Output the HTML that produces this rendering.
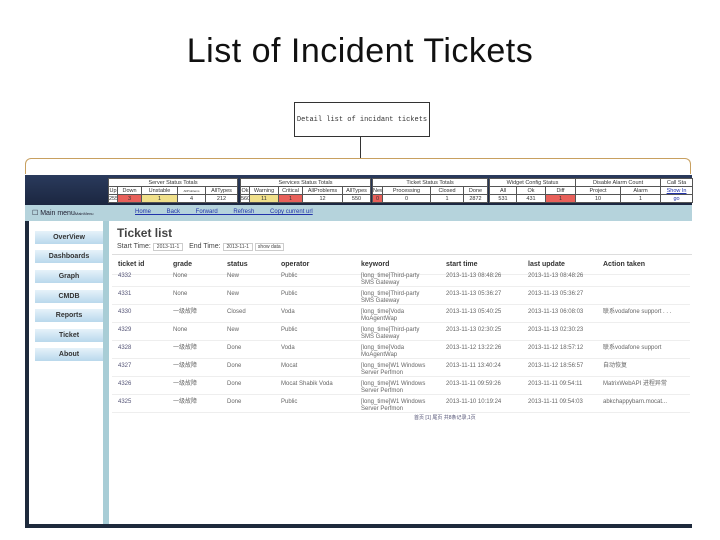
<!DOCTYPE html>
<html><head><meta charset="utf-8"><style>
*{margin:0;padding:0;box-sizing:border-box}
body{width:720px;height:540px;background:#fff;position:relative;overflow:hidden;font-family:"Liberation Sans","Noto Sans CJK SC",sans-serif}
.a{position:absolute}
h1{position:absolute;left:0;width:720px;top:32px;text-align:center;font-weight:normal;font-size:34px;color:#111;letter-spacing:0.5px}
table.s{position:absolute;top:178px;border-collapse:collapse;background:#fff;font-size:5.5px;color:#333;table-layout:fixed}
table.s td{border:1px solid #555;height:8px;text-align:center;line-height:6px;overflow:hidden;white-space:nowrap;padding:0}
.r{background:#e8605a}.y{background:#f0e08a}
.btn{position:absolute;left:35px;width:68px;height:13px;background:linear-gradient(#e6f2fa,#b9d8ec);font-size:7px;font-weight:bold;color:#333;text-align:center;line-height:13px}
.row{position:absolute;left:112px;width:578px;height:18px;border-bottom:1px solid #eee;font-size:6px;color:#666}
.row span{position:absolute;top:4px;line-height:7px}
.hd span{font-size:7px;font-weight:bold;color:#333}
</style></head><body>
<h1>List of Incident Tickets</h1>
<div class="a" style="left:294px;top:102px;width:136px;height:35px;border:1px solid #333;font-family:'Liberation Mono',monospace;font-size:7px;line-height:35px;text-align:center;color:#333">Detail list of incidant tickets</div>
<div class="a" style="left:360px;top:137px;width:1px;height:21px;background:#333"></div>
<div class="a" style="left:25px;top:158px;width:666px;height:16px;border:1px solid #c8a060;border-bottom:none;border-radius:6px 6px 0 0"></div>
<div class="a" style="left:25px;top:175px;width:667px;height:30px;background:linear-gradient(#2a3a5c,#1b2640)"></div>
<div class="a" style="left:25px;top:205px;width:667px;height:16px;background:#b5d3dc"></div>
<div class="a" style="left:25px;top:221px;width:4px;height:307px;background:#1e2a3c"></div>
<div class="a" style="left:29px;top:221px;width:76px;height:304px;background:#fff"></div>
<div class="a" style="left:103px;top:221px;width:6px;height:304px;background:#a8cdd6"></div>
<div class="a" style="left:25px;top:524px;width:667px;height:4px;background:#1e2a3c"></div>
<div class="a" style="left:32px;top:209px;font-size:7px;color:#223">☐ Main menu<span style="font-size:4px">MainMenu</span></div>
<div class="a" style="left:135px;top:209px;font-size:6px;color:#2233aa;text-decoration:underline;word-spacing:14px">Home Back Forward Refresh <span style="word-spacing:0">Copy current url</span></div>

<table class="s" style="left:108px;width:129px"><col style="width:9px"><col style="width:24px"><col style="width:36px"><col style="width:28px"><col style="width:32px">
<tr><td colspan="5">Server Status Totals</td></tr>
<tr><td>Up</td><td>Down</td><td>Unstable</td><td style="font-size:3px">AllProblems</td><td>AllTypes</td></tr>
<tr><td>255</td><td class="r">3</td><td class="y">1</td><td>4</td><td>212</td></tr></table>
<table class="s" style="left:240px;width:130px"><col style="width:9px"><col style="width:29px"><col style="width:24px"><col style="width:40px"><col style="width:28px">
<tr><td colspan="5">Services Status Totals</td></tr>
<tr><td>Ok</td><td>Warning</td><td>Critical</td><td>AllProblems</td><td>AllTypes</td></tr>
<tr><td>560</td><td class="y">11</td><td class="r">1</td><td>12</td><td>550</td></tr></table>
<table class="s" style="left:372px;width:115px"><col style="width:10px"><col style="width:48px"><col style="width:33px"><col style="width:24px">
<tr><td colspan="4">Ticket Status Totals</td></tr>
<tr><td>New</td><td>Processing</td><td>Closed</td><td>Done</td></tr>
<tr><td class="r">0</td><td>0</td><td>1</td><td>2872</td></tr></table>
<table class="s" style="left:489px;width:203px"><col style="width:27px"><col style="width:29px"><col style="width:30px"><col style="width:45px"><col style="width:40px"><col style="width:32px">
<tr><td colspan="3">Widget Config Status</td><td colspan="2">Disable Alarm Count</td><td>Call Sta</td></tr>
<tr><td>All</td><td>Ok</td><td>Diff</td><td>Project</td><td>Alarm</td><td style="color:#2233aa;text-decoration:underline">Show In</td></tr>
<tr><td>531</td><td>431</td><td class="r">1</td><td>10</td><td>1</td><td style="color:#2233aa">go</td></tr></table>

<div class="btn" style="top:231px">OverView</div>
<div class="btn" style="top:250px">Dashboards</div>
<div class="btn" style="top:270px">Graph</div>
<div class="btn" style="top:290px">CMDB</div>
<div class="btn" style="top:309px">Reports</div>
<div class="btn" style="top:329px">Ticket</div>
<div class="btn" style="top:348px">About</div>

<div class="a" style="left:117px;top:226px;font-size:12px;font-weight:bold;color:#444">Ticket list</div>
<div class="a" style="left:117px;top:242px;font-size:7px;color:#444;line-height:10px">Start Time: <span style="border:1px solid #ccc;padding:0 3px;font-size:5px">2013-11-1</span> &nbsp; End Time: <span style="border:1px solid #ccc;padding:0 3px;font-size:5px">2013-11-1</span> <span style="border:1px solid #ccc;padding:0 2px;font-size:5px">show data</span></div>
<div class="a" style="left:112px;top:254px;width:580px;height:1px;background:#ddd"></div>

<div class="row hd" style="top:257px"><span style="left:6px">ticket id</span><span style="left:61px">grade</span><span style="left:115px">status</span><span style="left:169px">operator</span><span style="left:249px">keyword</span><span style="left:334px">start time</span><span style="left:416px">last update</span><span style="left:491px">Action taken</span></div>
<div class="row" style="top:269px"><span style="left:6px;color:#557">4332</span><span style="left:61px">None</span><span style="left:115px">New</span><span style="left:169px">Public</span><span style="left:249px">[long_time]Third-party<br>SMS Gateway</span><span style="left:334px">2013-11-13 08:48:26</span><span style="left:416px">2013-11-13 08:48:26</span></div>
<div class="row" style="top:287px"><span style="left:6px;color:#557">4331</span><span style="left:61px">None</span><span style="left:115px">New</span><span style="left:169px">Public</span><span style="left:249px">[long_time]Third-party<br>SMS Gateway</span><span style="left:334px">2013-11-13 05:36:27</span><span style="left:416px">2013-11-13 05:36:27</span></div>
<div class="row" style="top:305px"><span style="left:6px;color:#557">4330</span><span style="left:61px">一级故障</span><span style="left:115px">Closed</span><span style="left:169px">Voda</span><span style="left:249px">[long_time]Voda<br>MoAgentWap</span><span style="left:334px">2013-11-13 05:40:25</span><span style="left:416px">2013-11-13 06:08:03</span><span style="left:491px">联系vodafone support . . .</span></div>
<div class="row" style="top:323px"><span style="left:6px;color:#557">4329</span><span style="left:61px">None</span><span style="left:115px">New</span><span style="left:169px">Public</span><span style="left:249px">[long_time]Third-party<br>SMS Gateway</span><span style="left:334px">2013-11-13 02:30:25</span><span style="left:416px">2013-11-13 02:30:23</span></div>
<div class="row" style="top:341px"><span style="left:6px;color:#557">4328</span><span style="left:61px">一级故障</span><span style="left:115px">Done</span><span style="left:169px">Voda</span><span style="left:249px">[long_time]Voda<br>MoAgentWap</span><span style="left:334px">2013-11-12 13:22:26</span><span style="left:416px">2013-11-12 18:57:12</span><span style="left:491px">联系vodafone support</span></div>
<div class="row" style="top:359px"><span style="left:6px;color:#557">4327</span><span style="left:61px">一级故障</span><span style="left:115px">Done</span><span style="left:169px">Mocat</span><span style="left:249px">[long_time]W1 Windows<br>Server Perfmon</span><span style="left:334px">2013-11-11 13:40:24</span><span style="left:416px">2013-11-12 18:56:57</span><span style="left:491px">自动恢复</span></div>
<div class="row" style="top:377px"><span style="left:6px;color:#557">4326</span><span style="left:61px">一级故障</span><span style="left:115px">Done</span><span style="left:169px">Mocat Shabik Voda</span><span style="left:249px">[long_time]W1 Windows<br>Server Perfmon</span><span style="left:334px">2013-11-11 09:59:26</span><span style="left:416px">2013-11-11 09:54:11</span><span style="left:491px">MatrixWebAPI 进程异常</span></div>
<div class="row" style="top:395px"><span style="left:6px;color:#557">4325</span><span style="left:61px">一级故障</span><span style="left:115px">Done</span><span style="left:169px">Public</span><span style="left:249px">[long_time]W1 Windows<br>Server Perfmon</span><span style="left:334px">2013-11-10 10:19:24</span><span style="left:416px">2013-11-11 09:54:03</span><span style="left:491px">abkchappybarn.mocat...</span></div>
<div class="a" style="left:414px;top:414px;font-size:5px;color:#557">首页 [1] 尾页 共8条记录,1页</div>
</body></html>
